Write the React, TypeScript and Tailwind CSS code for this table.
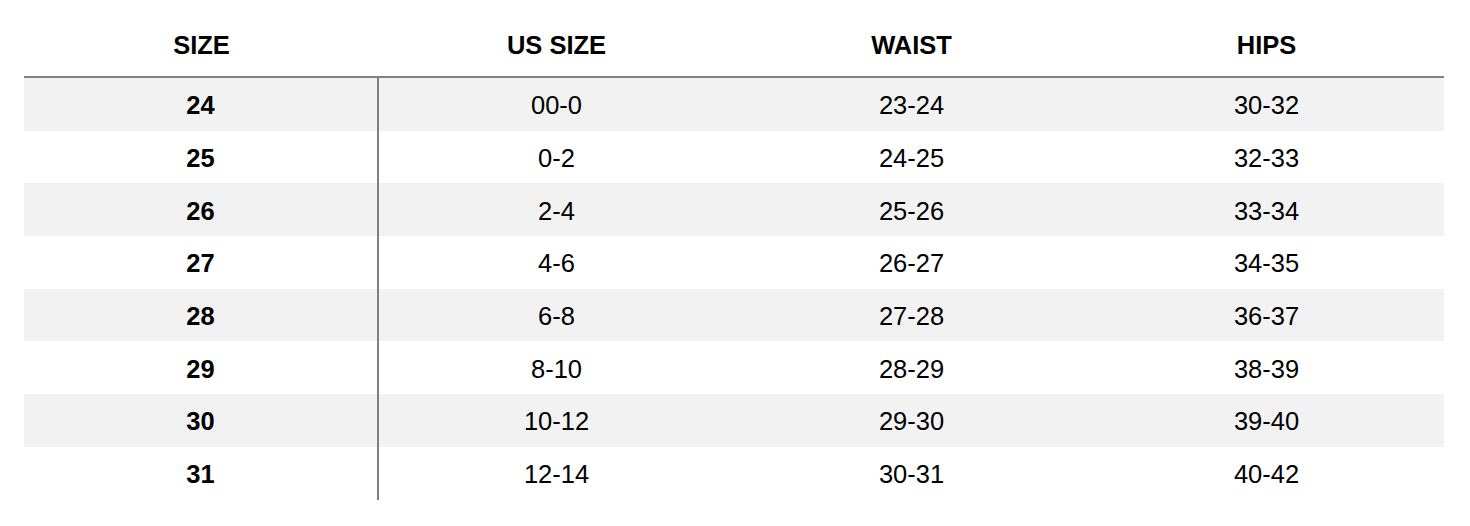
import React from 'react'

const rows = [
  ['24', '00-0', '23-24', '30-32'],
  ['25', '0-2', '24-25', '32-33'],
  ['26', '2-4', '25-26', '33-34'],
  ['27', '4-6', '26-27', '34-35'],
  ['28', '6-8', '27-28', '36-37'],
  ['29', '8-10', '28-29', '38-39'],
  ['30', '10-12', '29-30', '39-40'],
  ['31', '12-14', '30-31', '40-42'],
]

const headers = ['SIZE', 'US SIZE', 'WAIST', 'HIPS']

export default function App() {
  return (
    <div
      className="w-[1470px] h-[526px] bg-white text-black pl-6"
      style={{ fontFamily: '"Liberation Sans", Arial, sans-serif' }}
    >
      <div className="w-[1420px]">
        <div className="grid grid-cols-4 h-[78px] pt-[14px] border-b-2 border-[#808080]">
          {headers.map((h) => (
            <div key={h} className="flex items-center justify-center text-[25.5px] font-bold">
              {h}
            </div>
          ))}
        </div>

        {rows.map((r, i) => (
          <div
            key={r[0]}
            className={`grid grid-cols-4 h-[52.7px] ${i % 2 === 0 ? 'bg-[#f2f2f2]' : 'bg-white'}`}
          >
            <div className="flex items-center justify-center pt-[2px] text-[25.5px] font-bold border-r-2 border-[#808080]">
              {r[0]}
            </div>
            {r.slice(1).map((c, j) => (
              <div key={j} className="flex items-center justify-center pt-[2px] text-[25.5px]">
                {c}
              </div>
            ))}
          </div>
        ))}
      </div>
    </div>
  )
}
